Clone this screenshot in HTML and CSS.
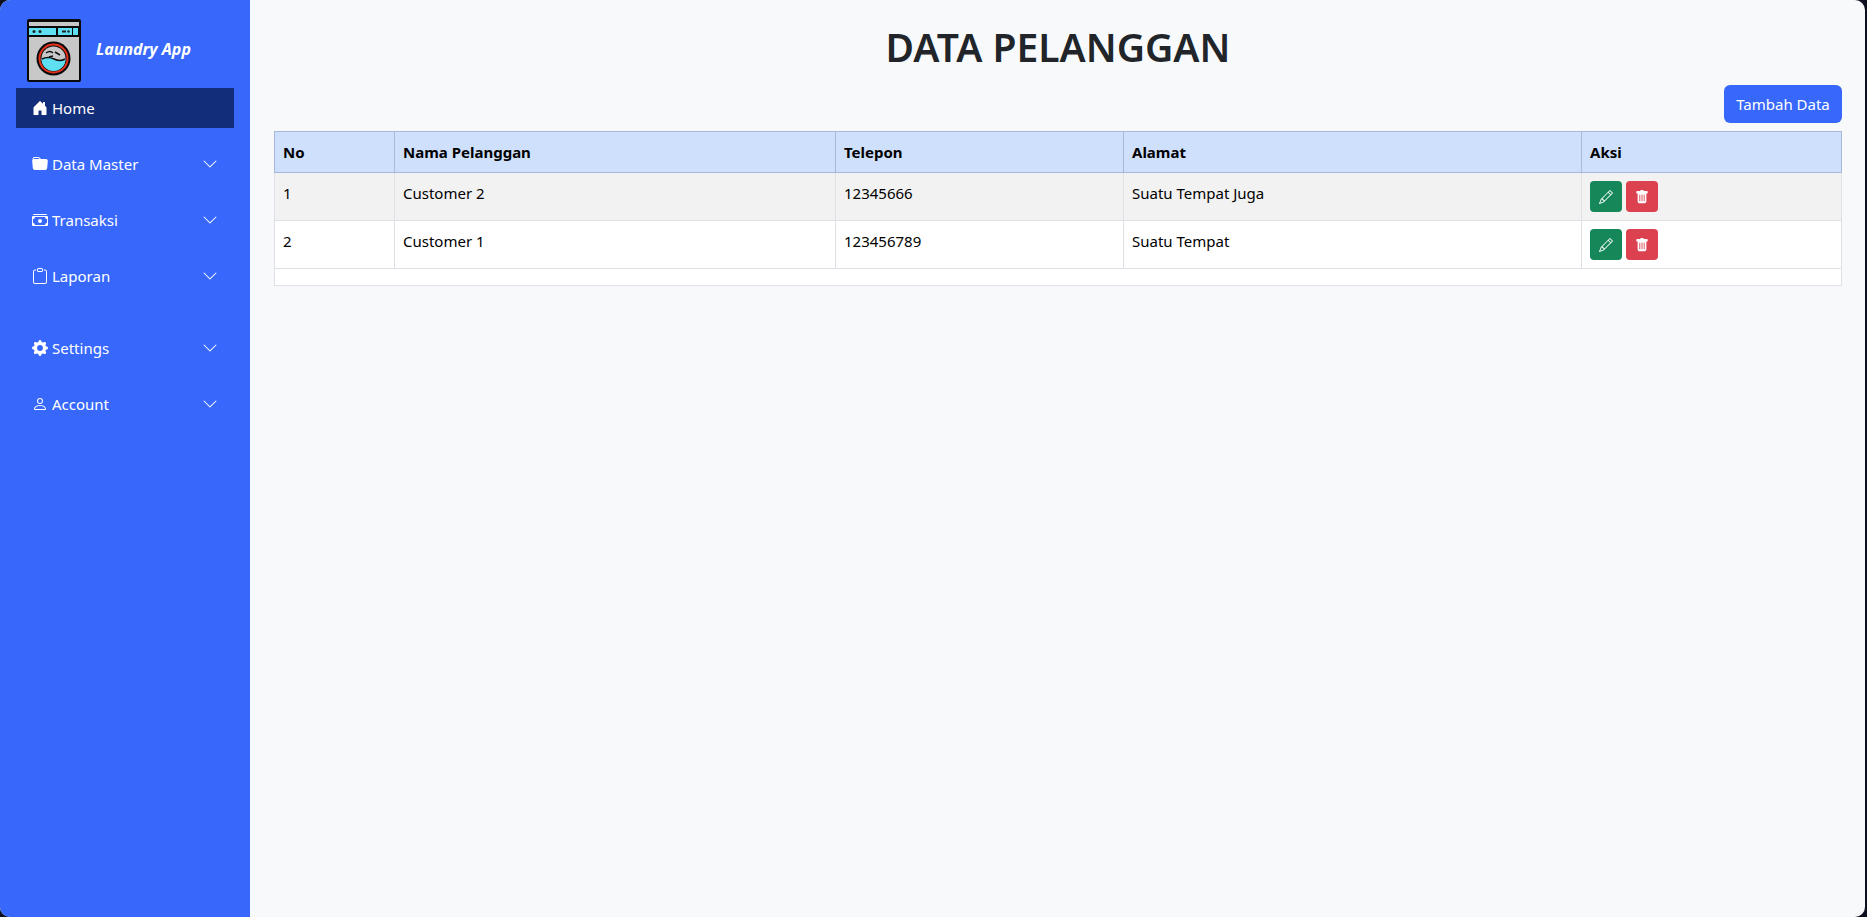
FILE: index.html
```html
<!doctype html>
<html>
<head>
  <title>Data Pelanggan</title>
  <link rel="stylesheet" href="styles.css">
</head>
<body>
  <div class="shell">
    <aside class="sidebar">
      <div class="brand">
        <svg class="logo" viewBox="0 0 54 63">
          <rect x="0" y="0" width="54" height="63" rx="2" fill="#0a0a0a"/>
          <rect x="2" y="3" width="50" height="4" fill="#c8c8c8"/>
          <rect x="2" y="9" width="27" height="7" fill="#5fe0f2"/>
          <rect x="31" y="9" width="14" height="7" fill="#5fe0f2"/>
          <rect x="46" y="9" width="5" height="7" fill="#5fe0f2"/>
          <circle cx="7" cy="12.500" r="1.500" fill="#222"/>
          <circle cx="13" cy="12.500" r="1.500" fill="#222"/>
          <rect x="35" y="11.500" width="4" height="2" fill="#222"/>
          <circle cx="41.500" cy="12.500" r="1.200" fill="#222"/>
          <rect x="2" y="18" width="50" height="43" fill="#c8c8c8"/>
          <circle cx="26.500" cy="39.500" r="17" fill="#0a0a0a"/>
          <circle cx="26.500" cy="39.500" r="15" fill="#e8321e"/>
          <circle cx="26.500" cy="39.500" r="13" fill="#0a0a0a"/>
          <circle cx="26.500" cy="39.500" r="12" fill="#c8c8c8"/>
          <path d="M14.500 40q6 -3 12 0t12 0a12 12 0 0 1 -24 0z" fill="#5fe0f2"/>
          <path d="M19 34q4 -3 7 0M28 33l5 3M22 38l4 -1M15 40q6 -3 12 0t11 0" fill="none" stroke="#111" stroke-width="1.500"/>
        </svg>
        <span class="brand-name">Laundry App</span>
      </div>

      <nav class="menu">
        <a class="menu-item active">
          <svg class="icon" viewBox="0 0 16 16"><path d="M6.500 14.500v-3.505c0-.245.25-.495.5-.495h2c.25 0 .5.25.5.5v3.500a.5.5 0 0 0 .5.5h4a.5.5 0 0 0 .5-.5v-7a.5.5 0 0 0-.146-.354L13 5.793V2.500a.5.5 0 0 0-.5-.5h-1a.5.5 0 0 0-.5.5v1.293L8.354 1.146a.5.5 0 0 0-.708 0l-6 6A.5.5 0 0 0 1.500 7.500v7a.5.5 0 0 0 .5.5h4a.5.5 0 0 0 .5-.5"/></svg>
          <span>Home</span>
        </a>
        <a class="menu-item">
          <svg class="icon" viewBox="0 0 16 16"><path d="M9.828 3h3.982a2 2 0 0 1 1.992 2.181l-.637 7A2 2 0 0 1 13.174 14H2.825a2 2 0 0 1-1.991-1.819l-.637-7a2 2 0 0 1 .342-1.310L.5 3a2 2 0 0 1 2-2h3.672a2 2 0 0 1 1.414.586l.828.828A2 2 0 0 0 9.828 3m-8.322.120q.322-.119.684-.120h5.396l-.707-.707A1 1 0 0 0 6.172 2H2.500a1 1 0 0 0-1 .981z"/></svg>
          <span>Data Master</span>
          <svg class="chevron" viewBox="0 0 16 16"><path fill-rule="evenodd" d="M1.646 4.646a.5.5 0 0 1 .708 0L8 10.293l5.646-5.647a.5.5 0 0 1 .708.708l-6 6a.5.5 0 0 1-.708 0l-6-6a.5.5 0 0 1 0-.708"/></svg>
        </a>
        <a class="menu-item">
          <svg class="icon" viewBox="0 0 16 16"><path d="M1 3a1 1 0 0 1 1-1h12a1 1 0 0 1 1 1zm7 8a2 2 0 1 0 0-4 2 2 0 0 0 0 4"/><path d="M0 5a1 1 0 0 1 1-1h14a1 1 0 0 1 1 1v8a1 1 0 0 1-1 1H1a1 1 0 0 1-1-1zm3 0a2 2 0 0 1-2 2v4a2 2 0 0 1 2 2h10a2 2 0 0 1 2-2V7a2 2 0 0 1-2-2z"/></svg>
          <span>Transaksi</span>
          <svg class="chevron" viewBox="0 0 16 16"><path fill-rule="evenodd" d="M1.646 4.646a.5.5 0 0 1 .708 0L8 10.293l5.646-5.647a.5.5 0 0 1 .708.708l-6 6a.5.5 0 0 1-.708 0l-6-6a.5.5 0 0 1 0-.708"/></svg>
        </a>
        <a class="menu-item">
          <svg class="icon" viewBox="0 0 16 16"><path d="M4 1.500H3a2 2 0 0 0-2 2V14a2 2 0 0 0 2 2h10a2 2 0 0 0 2-2V3.500a2 2 0 0 0-2-2h-1v1h1a1 1 0 0 1 1 1V14a1 1 0 0 1-1 1H3a1 1 0 0 1-1-1V3.500a1 1 0 0 1 1-1h1z"/><path d="M9.500 1a.5.5 0 0 1 .5.5v1a.5.5 0 0 1-.5.5h-3a.5.5 0 0 1-.5-.5v-1a.5.5 0 0 1 .5-.5zm-3-1A1.500 1.500 0 0 0 5 1.500v1A1.500 1.500 0 0 0 6.500 4h3A1.500 1.500 0 0 0 11 2.500v-1A1.500 1.500 0 0 0 9.500 0z"/></svg>
          <span>Laporan</span>
          <svg class="chevron" viewBox="0 0 16 16"><path fill-rule="evenodd" d="M1.646 4.646a.5.5 0 0 1 .708 0L8 10.293l5.646-5.647a.5.5 0 0 1 .708.708l-6 6a.5.5 0 0 1-.708 0l-6-6a.5.5 0 0 1 0-.708"/></svg>
        </a>
        <a class="menu-item spaced">
          <svg class="icon" viewBox="0 0 16 16"><path d="M9.405 1.050c-.413-1.400-2.397-1.400-2.810 0l-.1.340a1.464 1.464 0 0 1-2.105.872l-.31-.170c-1.283-.698-2.686.705-1.987 1.987l.169.311c.446.820.023 1.841-.872 2.105l-.34.1c-1.400.413-1.400 2.397 0 2.810l.34.1a1.464 1.464 0 0 1 .872 2.105l-.17.310c-.698 1.283.705 2.686 1.987 1.987l.311-.169a1.464 1.464 0 0 1 2.105.872l.1.340c.413 1.400 2.397 1.400 2.810 0l.1-.340a1.464 1.464 0 0 1 2.105-.872l.31.170c1.283.698 2.686-.705 1.987-1.987l-.169-.311a1.464 1.464 0 0 1 .872-2.105l.34-.1c1.400-.413 1.400-2.397 0-2.810l-.34-.1a1.464 1.464 0 0 1-.872-2.105l.17-.310c.698-1.283-.705-2.686-1.987-1.987l-.311.169a1.464 1.464 0 0 1-2.105-.872zM8 10.930a2.929 2.929 0 1 1 0-5.860 2.929 2.929 0 0 1 0 5.858z"/></svg>
          <span>Settings</span>
          <svg class="chevron" viewBox="0 0 16 16"><path fill-rule="evenodd" d="M1.646 4.646a.5.5 0 0 1 .708 0L8 10.293l5.646-5.647a.5.5 0 0 1 .708.708l-6 6a.5.5 0 0 1-.708 0l-6-6a.5.5 0 0 1 0-.708"/></svg>
        </a>
        <a class="menu-item">
          <svg class="icon" viewBox="0 0 16 16"><path d="M8 8a3 3 0 1 0 0-6 3 3 0 0 0 0 6m2-3a2 2 0 1 1-4 0 2 2 0 0 1 4 0m4 8c0 1-1 1-1 1H3s-1 0-1-1 1-4 6-4 6 3 6 4m-1-.004c-.001-.246-.154-.986-.832-1.664C11.516 10.680 10.289 10 8 10s-3.516.680-4.168 1.332c-.678.678-.83 1.418-.832 1.664z"/></svg>
          <span>Account</span>
          <svg class="chevron" viewBox="0 0 16 16"><path fill-rule="evenodd" d="M1.646 4.646a.5.5 0 0 1 .708 0L8 10.293l5.646-5.647a.5.5 0 0 1 .708.708l-6 6a.5.5 0 0 1-.708 0l-6-6a.5.5 0 0 1 0-.708"/></svg>
        </a>
      </nav>
    </aside>

    <main class="content">
      <h1 class="page-title">DATA PELANGGAN</h1>
      <div class="toolbar">
        <button class="btn-add">Tambah Data</button>
      </div>

      <table class="data-table">
        <thead>
          <tr>
            <th class="col-no">No</th>
            <th class="col-name">Nama Pelanggan</th>
            <th class="col-phone">Telepon</th>
            <th class="col-address">Alamat</th>
            <th>Aksi</th>
          </tr>
        </thead>
        <tbody>
          <tr class="striped">
            <td>1</td>
            <td>Customer 2</td>
            <td>12345666</td>
            <td>Suatu Tempat Juga</td>
            <td>
              <div class="actions">
                <button class="btn-icon btn-edit"><svg viewBox="0 0 16 16"><path d="M12.146.146a.5.5 0 0 1 .708 0l3 3a.5.5 0 0 1 0 .708l-10 10a.5.5 0 0 1-.168.110l-5 2a.5.5 0 0 1-.65-.65l2-5a.5.5 0 0 1 .11-.168zM11.207 2.500 13.500 4.793 14.793 3.500 12.500 1.207zm1.586 3L10.500 3.207 4 9.707V10h.5a.5.5 0 0 1 .5.5v.5h.5a.5.5 0 0 1 .5.5v.5h.293zm-9.761 5.175-.106.106-1.528 3.821 3.821-1.528.106-.106A.5.5 0 0 1 5 12.500V12h-.5a.5.5 0 0 1-.5-.5V11h-.5a.5.5 0 0 1-.468-.325"/></svg></button>
                <button class="btn-icon btn-delete"><svg viewBox="0 0 16 16"><path d="M2.500 1a1 1 0 0 0-1 1v1a1 1 0 0 0 1 1H3v9a2 2 0 0 0 2 2h6a2 2 0 0 0 2-2V4h.5a1 1 0 0 0 1-1V2a1 1 0 0 0-1-1H10a1 1 0 0 0-1-1H7a1 1 0 0 0-1 1zm3 4a.5.5 0 0 1 .5.5v7a.5.5 0 0 1-1 0v-7a.5.5 0 0 1 .5-.5M8 5a.5.5 0 0 1 .5.5v7a.5.5 0 0 1-1 0v-7A.5.5 0 0 1 8 5m3 .5v7a.5.5 0 0 1-1 0v-7a.5.5 0 0 1 1 0"/></svg></button>
              </div>
            </td>
          </tr>
          <tr>
            <td>2</td>
            <td>Customer 1</td>
            <td>123456789</td>
            <td>Suatu Tempat</td>
            <td>
              <div class="actions">
                <button class="btn-icon btn-edit"><svg viewBox="0 0 16 16"><path d="M12.146.146a.5.5 0 0 1 .708 0l3 3a.5.5 0 0 1 0 .708l-10 10a.5.5 0 0 1-.168.110l-5 2a.5.5 0 0 1-.65-.65l2-5a.5.5 0 0 1 .11-.168zM11.207 2.500 13.500 4.793 14.793 3.500 12.500 1.207zm1.586 3L10.500 3.207 4 9.707V10h.5a.5.5 0 0 1 .5.5v.5h.5a.5.5 0 0 1 .5.5v.5h.293zm-9.761 5.175-.106.106-1.528 3.821 3.821-1.528.106-.106A.5.5 0 0 1 5 12.500V12h-.5a.5.5 0 0 1-.5-.5V11h-.5a.5.5 0 0 1-.468-.325"/></svg></button>
                <button class="btn-icon btn-delete"><svg viewBox="0 0 16 16"><path d="M2.500 1a1 1 0 0 0-1 1v1a1 1 0 0 0 1 1H3v9a2 2 0 0 0 2 2h6a2 2 0 0 0 2-2V4h.5a1 1 0 0 0 1-1V2a1 1 0 0 0-1-1H10a1 1 0 0 0-1-1H7a1 1 0 0 0-1 1zm3 4a.5.5 0 0 1 .5.5v7a.5.5 0 0 1-1 0v-7a.5.5 0 0 1 .5-.5M8 5a.5.5 0 0 1 .5.5v7a.5.5 0 0 1-1 0v-7A.5.5 0 0 1 8 5m3 .5v7a.5.5 0 0 1-1 0v-7a.5.5 0 0 1 1 0"/></svg></button>
              </div>
            </td>
          </tr>
          <tr class="filler">
            <td colspan="5"></td>
          </tr>
        </tbody>
      </table>
    </main>
  </div>
</body>
</html>
```

FILE: styles.css
```css
* {
  box-sizing: border-box;
}

html, body {
  height: 100%;
}

body {
  margin: 0;
  background: #0b0f20;
  color: #212529;
  font-family: "Noto Sans", "Open Sans", sans-serif;
  font-size: 15px;
  overflow: hidden;
}

.shell {
  display: flex;
  width: 1865px;
  height: 917px;
  border-radius: 10px;
  overflow: hidden;
  background: #f8f9fa;
}

.sidebar {
  flex: 0 0 250px;
  padding: 19px 16px 0;
  background: #3768fb;
  color: #fff;
}

.brand {
  display: flex;
  align-items: center;
  height: 63px;
  padding-left: 11px;
}

.logo {
  width: 54px;
  height: 63px;
}

.brand-name {
  margin-left: 15px;
  padding-bottom: 4px;
  font-size: 16px;
  font-weight: 700;
  font-style: italic;
}

.menu {
  display: flex;
  flex-direction: column;
  gap: 16px;
  margin-top: 6px;
}

.menu-item {
  display: flex;
  align-items: center;
  height: 40px;
  padding: 0 16px;
  color: #fff;
}

.menu-item.active {
  background: #122d79;
}

.menu-item.spaced {
  margin-top: 16px;
}

.icon {
  flex: none;
  width: 16px;
  height: 16px;
  margin-right: 4px;
  fill: #fff;
}

.chevron {
  flex: none;
  width: 16px;
  height: 16px;
  margin-left: auto;
  fill: #fff;
}

.content {
  flex: 1;
  min-width: 0;
  padding: 0 23px 0 24px;
}

.page-title {
  margin: 0;
  padding-top: 20px;
  font-size: 39px;
  line-height: 54px;
  font-weight: 600;
  text-align: center;
}

.toolbar {
  display: flex;
  justify-content: flex-end;
  margin-top: 11px;
  margin-bottom: 8px;
}

.btn-add {
  width: 118px;
  height: 38px;
  padding: 0;
  border: 0;
  border-radius: 6px;
  background: #3768fb;
  color: #fff;
  font-family: inherit;
  font-size: 15px;
}

.data-table {
  width: 100%;
  border-collapse: collapse;
  table-layout: fixed;
  background: #fff;
  color: #000;
}

.data-table th,
.data-table td {
  padding: 8px;
  line-height: 24px;
  text-align: left;
  vertical-align: top;
  border: 1px solid #dee2e6;
}

.data-table th {
  background: #cfe0fd;
  border-color: #a9b8d8;
  font-weight: 700;
}

.col-no {
  width: 120px;
}

.col-name {
  width: 441px;
}

.col-phone {
  width: 288px;
}

.col-address {
  width: 458px;
}

.striped td {
  background: #f2f2f2;
}

.data-table .filler td {
  height: 17px;
  padding: 0;
  line-height: 0;
}

.actions {
  display: flex;
  gap: 4px;
}

.btn-icon {
  display: flex;
  align-items: center;
  justify-content: center;
  width: 32px;
  height: 31px;
  padding: 0;
  border: 0;
  border-radius: 4px;
  color: #fff;
}

.btn-icon svg {
  width: 14px;
  height: 14px;
  fill: #fff;
}

.btn-edit {
  background: #158759;
}

.btn-delete {
  background: #dc414f;
}
```
